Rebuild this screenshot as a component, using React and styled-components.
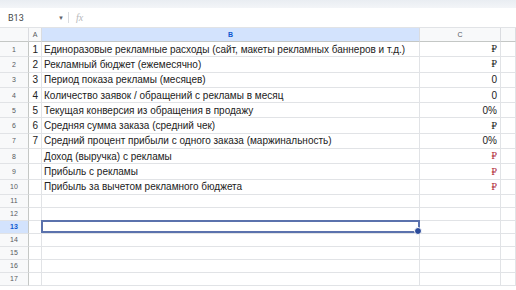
import React from 'react';
import styled, { createGlobalStyle } from 'styled-components';

const rows = [
  { n: 1, a: '1', b: 'Единоразовые рекламные расходы (сайт, макеты рекламных баннеров и т.д.)', c: '₽' },
  { n: 2, a: '2', b: 'Рекламный бюджет (ежемесячно)', c: '₽' },
  { n: 3, a: '3', b: 'Период показа рекламы (месяцев)', c: '0' },
  { n: 4, a: '4', b: 'Количество заявок / обращений с рекламы в месяц', c: '0' },
  { n: 5, a: '5', b: 'Текущая конверсия из обращения в продажу', c: '0%' },
  { n: 6, a: '6', b: 'Средняя сумма заказа (средний чек)', c: '₽' },
  { n: 7, a: '7', b: 'Средний процент прибыли с одного заказа (маржинальность)', c: '0%' },
  { n: 8, a: '', b: 'Доход (выручка) с рекламы', c: '₽', red: true },
  { n: 9, a: '', b: 'Прибыль с рекламы', c: '₽', red: true },
  { n: 10, a: '', b: 'Прибыль за вычетом рекламного бюджета', c: '₽', red: true },
];

const emptyRows = [11, 12, 13, 14, 15, 16, 17];

const GlobalStyle = createGlobalStyle`
  html, body {
    margin: 0;
    padding: 0;
    background: #fff;
    overflow: hidden;
  }
  body {
    font-family: "Liberation Sans", Arial, sans-serif;
  }
`;

const Page = styled.div`
  width: 516px;
  height: 290px;
  overflow: hidden;
  background: #fff;
`;

const TopStrip = styled.div`
  height: 8px;
  background: linear-gradient(#e9edf2, #f3f5f8);
`;

const FormulaBar = styled.div`
  height: 19px;
  display: flex;
  align-items: center;
  border-bottom: 1px solid #e1e3e6;
  color: #444746;
  font-size: 9px;
`;

const NameBox = styled.div`
  width: 50px;
  padding-left: 8px;
  font-family: "Roboto", "Liberation Sans", sans-serif;
`;

const Caret = styled.span`
  font-size: 6px;
  color: #5f6368;
  width: 9px;
`;

const Divider = styled.span`
  width: 1px;
  height: 11px;
  background: #dadce0;
  margin: 0 7px 0 1px;
`;

const Fx = styled.span`
  font-family: "Liberation Serif", serif;
  font-style: italic;
  color: #b6b8bb;
  font-size: 10px;
`;

const Grid = styled.div`
  display: grid;
  grid-template-columns: 29px 13px 378px 81px 15px;
`;

const Head = styled.div`
  height: 13px;
  background: ${({ $active }) => ($active ? '#d3e3fd' : '#f8f9fa')};
  border-right: 1px solid #dadce0;
  border-bottom: 1px solid #c4c7c5;
  color: ${({ $active }) => ($active ? '#0b57d0' : '#575a5e')};
  font-size: 7px;
  font-weight: ${({ $active }) => ($active ? 700 : 400)};
  display: flex;
  align-items: center;
  justify-content: center;
  box-sizing: content-box;
`;

const RowNum = styled.div`
  height: ${({ $h }) => $h}px;
  background: ${({ $active }) => ($active ? '#d3e3fd' : '#f8f9fa')};
  border-right: 1px solid #c4c7c5;
  border-bottom: 1px solid #e1e3e6;
  color: ${({ $active }) => ($active ? '#0b57d0' : '#575a5e')};
  font-weight: ${({ $active }) => ($active ? 700 : 400)};
  font-size: 7px;
  display: flex;
  align-items: center;
  justify-content: center;
  box-sizing: border-box;
`;

const Cell = styled.div`
  position: relative;
  height: ${({ $h }) => $h}px;
  border-right: 1px solid #e1e3e6;
  border-bottom: 1px solid #e1e3e6;
  box-sizing: border-box;
  font-size: 10px;
  color: ${({ $red }) => ($red ? '#b0283a' : '#222')};
  display: flex;
  align-items: center;
  justify-content: ${({ $right }) => ($right ? 'flex-end' : 'flex-start')};
  padding: 0 ${({ $right }) => ($right ? '3px' : '2px')};
  white-space: nowrap;
  overflow: visible;
`;

const Ruble = styled.span`
  font-family: "DejaVu Serif", "Liberation Serif", serif;
  font-size: 9px;
  font-weight: 400;
`;

const Selection = styled.div`
  position: absolute;
  inset: -1px -1px 0 -1px;
  border: 2px solid #5b72ad;
  pointer-events: none;
`;

const Handle = styled.span`
  position: absolute;
  right: -4px;
  bottom: -4px;
  width: 6px;
  height: 6px;
  border-radius: 50%;
  background: #2b4b9b;
  border: 1px solid #fff;
`;

function Value({ v }) {
  return v === '₽' ? <Ruble>₽</Ruble> : v;
}

export default function App() {
  return (
    <Page>
      <GlobalStyle />
      <TopStrip />
      <FormulaBar>
        <NameBox>B13</NameBox>
        <Caret>▼</Caret>
        <Divider />
        <Fx>fx</Fx>
      </FormulaBar>
      <Grid>
        <Head />
        <Head>A</Head>
        <Head $active>B</Head>
        <Head>C</Head>
        <Head />
        {rows.map((r) => (
          <React.Fragment key={r.n}>
            <RowNum $h={15.3}>{r.n}</RowNum>
            <Cell $h={15.3} $right>{r.a}</Cell>
            <Cell $h={15.3}>{r.b}</Cell>
            <Cell $h={15.3} $right $red={r.red}><Value v={r.c} /></Cell>
            <Cell $h={15.3} />
          </React.Fragment>
        ))}
        {emptyRows.map((n) => (
          <React.Fragment key={n}>
            <RowNum $h={13} $active={n === 13}>{n}</RowNum>
            <Cell $h={13} />
            <Cell $h={13}>
              {n === 13 && (
                <Selection>
                  <Handle />
                </Selection>
              )}
            </Cell>
            <Cell $h={13} />
            <Cell $h={13} />
          </React.Fragment>
        ))}
      </Grid>
    </Page>
  );
}
